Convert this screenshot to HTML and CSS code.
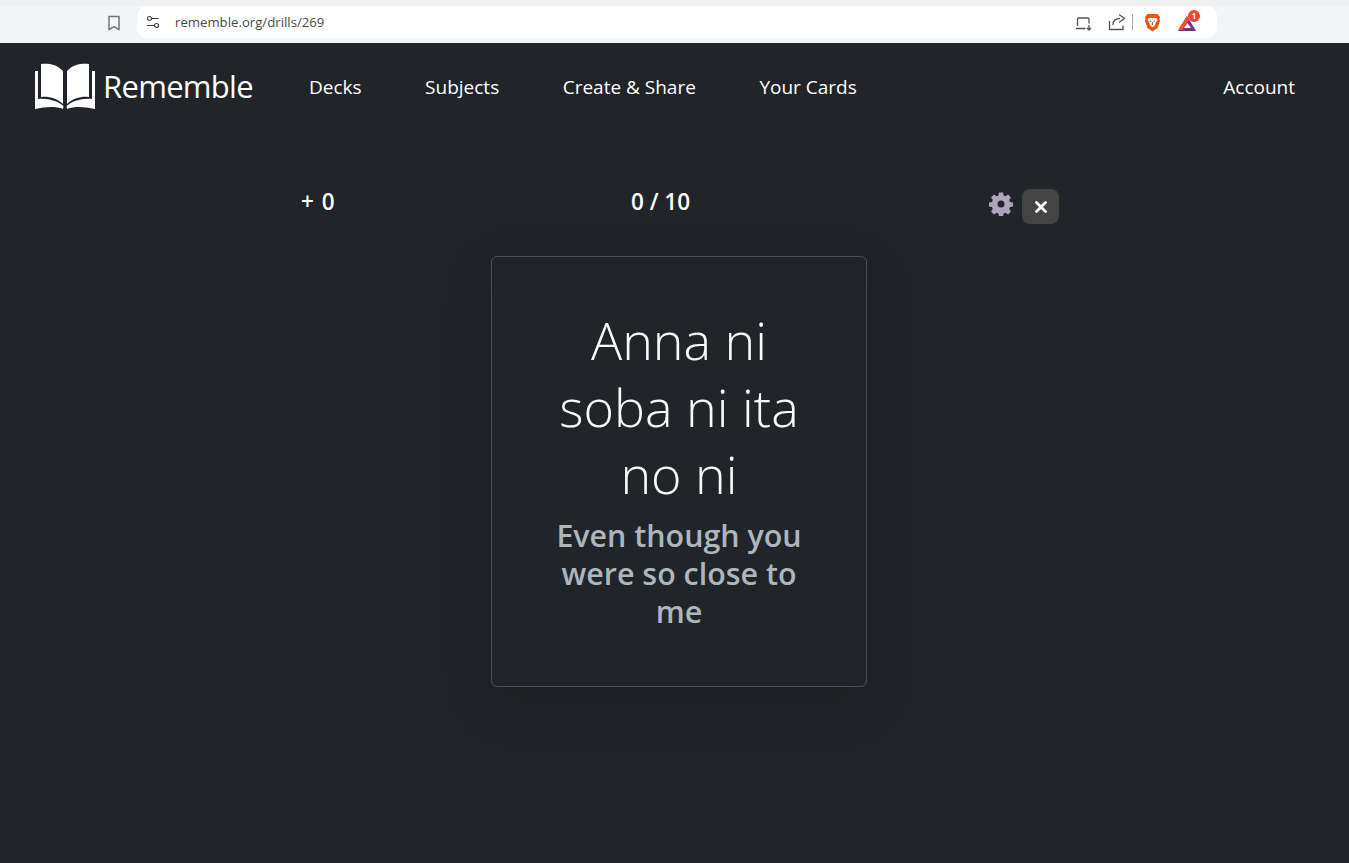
FILE: index.html
```html
<!DOCTYPE html>
<html lang="en">
<head>
<meta charset="utf-8">
<title>Rememble</title>
<link rel="stylesheet" href="styles.css">
</head>
<body>
<header class="chrome">
  <svg class="bookmark" width="14" height="16" viewBox="0 0 14 16"><path d="M2 1.500h10v13.200l-5-3-5 3z" fill="none" stroke="#6b7780" stroke-width="1.500" stroke-linejoin="round"/></svg>
  <div class="omnibox">
    <svg class="tune" width="14" height="14" viewBox="0 0 14 14" fill="none" stroke="#444" stroke-width="1.200"><circle cx="3.500" cy="3.500" r="2"/><path d="M6 3.500h7M1 10.500h7"/><circle cx="10.500" cy="10.500" r="2"/></svg>
    <span class="url">rememble.org/drills/269</span>
    <div class="tools">
      <svg class="laptop" width="18" height="14" viewBox="0 0 18 14" fill="none" stroke="#555" stroke-width="1.300"><path d="M2.500 9V2a1 1 0 011-1h9.500a1 1 0 011 1v4.500"/><path d="M1 11.500h9.500M14 8v5M12 11l2 2 2-2"/></svg>
      <svg class="share" width="18" height="18" viewBox="0 0 18 18" fill="none" stroke="#555" stroke-width="1.300"><path d="M1.500 8v8.500h13.500v-4"/><path d="M5 12c0-5 3-6.500 7-6.500M11 1.500l5.500 4-5.500 4"/></svg>
      <i class="sep"></i>
      <svg class="brave" width="17" height="19" viewBox="0 0 17 19"><path d="M3.500 1h10L16 4l-.5 2 .5 2-2.500 7-5 3.500-5-3.500L1 8l.5-2L1 4z" fill="#f1500f"/><path d="M4 5.500l2.500-.8 2 .6 2-.6 2.500.8.500 1.500-2 3-.5 2.500-2.500 2-2.500-2-.5-2.500-2-3z" fill="#fff"/><path d="M6 8l1.500.7M11 8l-1.500.7M8.500 9v3" stroke="#f1500f" stroke-width="1" fill="none"/></svg>
      <div class="bat">
        <svg width="20" height="17" viewBox="0 0 20 17"><path d="M10 1L1 16h18z" fill="#7b2d8e"/><path d="M10 1L1 15h4.500l6.500-10z" fill="#f5502a"/><path d="M10.500 8l-3.500 5h7z" fill="#fff"/></svg>
        <b class="badge">1</b>
      </div>
    </div>
  </div>
</header>

<nav class="nav">
  <a class="brand">
    <svg class="logo" width="60" height="46" viewBox="0 0 60 46"><path fill="#fff" d="M6 1C12 0 22 1 28 8V41C22 35 13 33 6 34ZM54 1C48 0 38 1 32 8V41C38 35 47 33 54 34ZM0 8H3V36C13 35 23 38 28.500 43L28 46C20 43 10 44 0 46ZM60 8H57V36C47 35 37 38 31.500 43L32 46C40 43 50 44 60 46Z"/></svg>
    <span class="brand-name">Rememble</span>
  </a>
  <ul class="links">
    <li>Decks</li>
    <li>Subjects</li>
    <li>Create &amp; Share</li>
    <li>Your Cards</li>
  </ul>
  <span class="account">Account</span>
</nav>

<main class="drill">
  <div class="status">
    <div class="score">+ 0</div>
    <div class="progress">0 / 10</div>
    <div class="actions">
      <svg class="gear" width="24" height="24" viewBox="0 0 24 24"><path fill="#aea5bb" fill-rule="evenodd" d="M10 0.500h4l.6 3 1.900.8 2.600-1.700 2.800 2.800-1.700 2.600.8 1.900 3 .6v4l-3 .6-.8 1.900 1.700 2.600-2.800 2.800-2.600-1.700-1.900.8-.6 3h-4l-.6-3-1.900-.8-2.600 1.700-2.800-2.800 1.700-2.600-.8-1.900-3-.6v-4l3-.6.8-1.900L2.100 5.400l2.800-2.800 2.600 1.700 1.900-.8zM12 8.500a3.500 3.500 0 100 7 3.500 3.500 0 000-7z"/></svg>
      <button class="close"><svg width="12" height="12" viewBox="0 0 12 12"><path d="M1.500 1.500l9 9M10.500 1.500l-9 9" stroke="#fff" stroke-width="2.800" stroke-linecap="round"/></svg></button>
    </div>
  </div>
  <section class="card">
    <h1 class="phrase">Anna ni soba ni ita no ni</h1>
    <h2 class="meaning">Even though you were so close to me</h2>
  </section>
</main>
</body>
</html>
```
FILE: styles.css
```css
* { box-sizing: border-box; }
html, body { margin: 0; height: 100%; }
body {
  background: #212529;
  color: #fff;
  font-family: "Open Sans", "Noto Sans", sans-serif;
  overflow: hidden;
}
.chrome {
  height: 43px;
  background: #f3f4f6;
  border-top: 6px solid #eef0f2;
  display: flex;
  align-items: flex-start;
  padding-left: 107px;
}
.bookmark { margin-top: 9px; margin-right: 16px; }
.omnibox {
  width: 1080px;
  height: 32px;
  background: #fff;
  border-radius: 10px;
  display: flex;
  align-items: center;
  padding-left: 9px;
}
.tune { margin-right: 15px; }
.url { font-size: 13.200px; color: #4a4a4a; }
.tools { margin-left: auto; display: flex; align-items: center; padding-right: 20px; }
.laptop { margin-top: 3px; }
.share { margin-left: 15px; }
.sep { width: 1px; height: 16px; background: #aaa; margin: 0 11px 0 6px; }
.bat { position: relative; margin-left: 16px; height: 17px; margin-top: 3px; }
.badge {
  position: absolute; top: -5px; right: -3px;
  width: 12px; height: 12px; border-radius: 50%;
  background: #f5452a; color: #fff;
  font-size: 8px; font-weight: 700; line-height: 12px; text-align: center;
}
.nav {
  height: 88px;
  display: flex;
  align-items: center;
  padding: 0 54px 0 35px;
}
.brand { display: flex; align-items: center; width: 274px; }
.logo { margin: 0 9px 2px 0; }
.brand-name { font-size: 31px; font-weight: 400; letter-spacing: -.7px; margin: 0 0 2px -1px; }
.links { list-style: none; margin: 0; padding: 0; display: flex; gap: 63.500px; font-size: 19px; }
.account { margin-left: auto; font-size: 19px; }
.drill { width: 759px; margin-left: 301px; }
.status { display: flex; align-items: flex-start; height: 125px; padding-top: 56px; }
.score, .progress { font-size: 22.500px; font-weight: 600; line-height: 30px; word-spacing: 2px; }
.score { width: 330px; }
.progress { word-spacing: 0; }
.actions { margin-left: auto; display: flex; align-items: flex-start; gap: 9px; margin-top: 2px; margin-right: 1px; }
.gear { margin-top: 3px; }
.close {
  width: 37px; height: 35px;
  border: 0; border-radius: 8px;
  background: #444;
  display: flex; align-items: center; justify-content: center;
  padding: 0;
}
.card {
  width: 376px; height: 431px;
  margin-left: 190px;
  border: 1px solid #495057;
  border-radius: 6px;
  box-shadow: 0 16px 48px rgba(0,0,0,.18);
  padding: 49px 48px 0;
  text-align: center;
}
.phrase { margin: 0 0 10px; font-size: 52px; font-weight: 300; line-height: 67px; color: #f8f9fa; }
.meaning { margin: 0; font-size: 30.400px; font-weight: 600; line-height: 38px; color: #adb5bd; }
```
